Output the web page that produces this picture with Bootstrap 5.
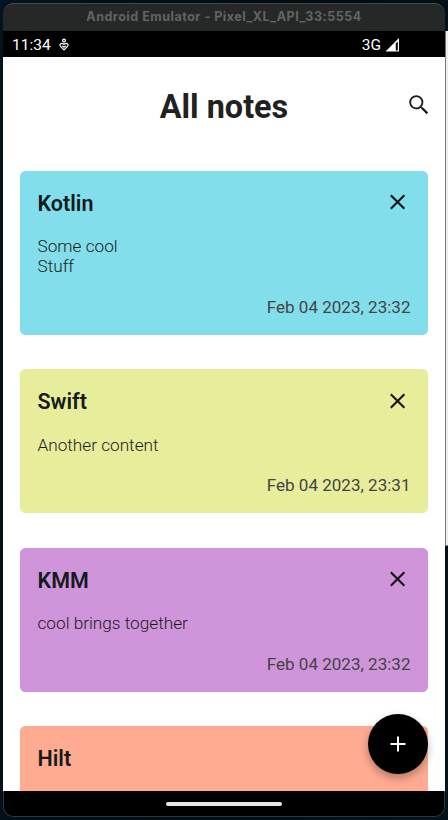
<!DOCTYPE html>
<html lang="en">
<head>
<meta charset="utf-8">
<meta name="viewport" content="width=device-width, initial-scale=1">
<title>All notes</title>
<link href="https://cdn.jsdelivr.net/npm/bootstrap@5.3.0/dist/css/bootstrap.min.css" rel="stylesheet">
<style>
html, body { height: 820px; overflow: hidden; }
body { background: linear-gradient(100deg, #02141f, #010c13 50%, #03131c); font-family: Roboto, "Liberation Sans", sans-serif; color: #1c1b1f; padding: 3px 0 0 3px; }
.desktop-edge { width: 3px; height: 515px; margin: 28px 0 0 0; background: #eee; border-bottom: 1px solid #777; border-left: 1px solid #777; }
.emulator { width: 442px; height: 814px; border-radius: 10px; background: #000; box-shadow: inset 0 0 0 1px #333; }
.titlebar { height: 28px; background: #262827; border-top: 1px solid #474948; border-radius: 10px 10px 0 0; color: #626463; font: 700 12.5px/26px Inter, sans-serif; letter-spacing: .52px; }
.statusbar { height: 26px; background: #000; color: #fff; font-size: 15.5px; line-height: 26px; padding: 1px 45px 0 9px; }
.status-heart { margin-left: 7px; }
.screen { height: 734px; background: #fff; padding: 0 17px; }
.heading { height: 114px; padding-top: 27px; }
.heading h1 { font-size: 32.4px; line-height: 46px; font-weight: 700; color: #212121; }
.search { right: -4px; top: 35px; }
.note { border: 0; border-radius: 5.5px; padding: 18px 17.5px 17px; height: 144px; margin-bottom: 34.4px; color: #1c1b1b; background: var(--tone); }
.note.tall { height: 164px; }
.note h2 { font-size: 21.5px; line-height: 30px; font-weight: 600; color: #151a1b; }
.note p { font-size: 17.2px; line-height: 20px; font-weight: 300; margin-top: 17.4px; }
.note time { font-size: 17.05px; line-height: 21px; color: #444; }
.cross { margin-top: -.6px; }
.blue { --tone: #81deea; } .lime { --tone: #e7ed9b; } .violet { --tone: #cf94da; } .coral { --tone: #ffab91; }
.fab { right: 17px; bottom: 17px; width: 60px; height: 60px; background: #000; box-shadow: 0 4px 9px rgba(0,0,0,.3); }
.navpill { width: 116px; height: 4px; background: #e8e8e8; border-radius: 2px; }
.navarea { height: 26px; }
</style>
</head>
<body>
<div class="d-flex">
<main class="emulator overflow-hidden flex-shrink-0">
  <div class="titlebar text-center">Android Emulator - Pixel_XL_API_33:5554</div>
  <div class="statusbar d-flex align-items-center">
    <span>11:34</span>
    <svg class="status-heart" width="12" height="14" viewBox="0 0 12 14" fill="none" stroke="#fff" stroke-width="1.2"><circle cx="6" cy="2.5" r="1.4"/><path d="M6 11.8 2.3 8.1C1 6.3 3.8 4.3 6 6.3 8.2 4.3 11 6.3 9.7 8.1zM4.2 7.6 6 9.1l1.8-1.5"/></svg>
    <span class="ms-auto">3G</span>
    <svg class="ms-1" width="15" height="14" viewBox="0 0 15 14"><path d="M.5 13.5 14 0v13.5z" fill="#fff"/><path d="M10.8 5.5v7h2v-9z" fill="#000"/></svg>
  </div>
  <section class="screen position-relative overflow-hidden">
    <header class="heading position-relative text-center">
      <h1 class="m-0">All notes</h1>
      <svg class="search position-absolute" width="26" height="26" viewBox="0 0 24 24" fill="#1c1b1f"><path d="M15.5 14h-.79l-.28-.27A6.47 6.47 0 0 0 16 9.5 6.5 6.5 0 1 0 9.5 16c1.61 0 3.09-.59 4.23-1.57l.27.28v.79l5 4.99L20.49 19zm-6 .3a4.8 4.8 0 1 1 0-9.6 4.8 4.8 0 0 1 0 9.6z"/></svg>
    </header>
    <article class="card note tall blue">
      <div class="d-flex justify-content-between"><h2 class="m-0">Kotlin</h2><svg class="cross" width="26" height="28" viewBox="0 0 24 26"><path d="m5.3 6.7 12.6 12.6M17.9 6.7 5.3 19.3" stroke="#161616" stroke-width="2"/></svg></div>
      <p class="mb-0">Some cool<br>Stuff</p>
      <time class="mt-auto text-end">Feb 04 2023, 23:32</time>
    </article>
    <article class="card note lime">
      <div class="d-flex justify-content-between"><h2 class="m-0">Swift</h2><svg class="cross" width="26" height="28" viewBox="0 0 24 26"><path d="m5.3 6.7 12.6 12.6M17.9 6.7 5.3 19.3" stroke="#161616" stroke-width="2"/></svg></div>
      <p class="mb-0">Another content</p>
      <time class="mt-auto text-end">Feb 04 2023, 23:31</time>
    </article>
    <article class="card note violet">
      <div class="d-flex justify-content-between"><h2 class="m-0">KMM</h2><svg class="cross" width="26" height="28" viewBox="0 0 24 26"><path d="m5.3 6.7 12.6 12.6M17.9 6.7 5.3 19.3" stroke="#161616" stroke-width="2"/></svg></div>
      <p class="mb-0">cool brings together</p>
      <time class="mt-auto text-end">Feb 04 2023, 23:32</time>
    </article>
    <article class="card note coral"><h2 class="m-0">Hilt</h2></article>
    <button class="fab btn p-0 border-0 rounded-circle position-absolute d-flex align-items-center justify-content-center" aria-label="Add note">
      <svg width="26" height="26" viewBox="0 0 26 26"><path d="M13 5.5v15M5.5 13h15" stroke="#fff" stroke-width="2"/></svg>
    </button>
  </section>
  <div class="navarea d-flex align-items-center justify-content-center"><div class="navpill"></div></div>
</main>
<div class="desktop-edge"></div>
</div>
<script src="https://cdn.jsdelivr.net/npm/bootstrap@5.3.0/dist/js/bootstrap.bundle.min.js"></script>
</body>
</html>
